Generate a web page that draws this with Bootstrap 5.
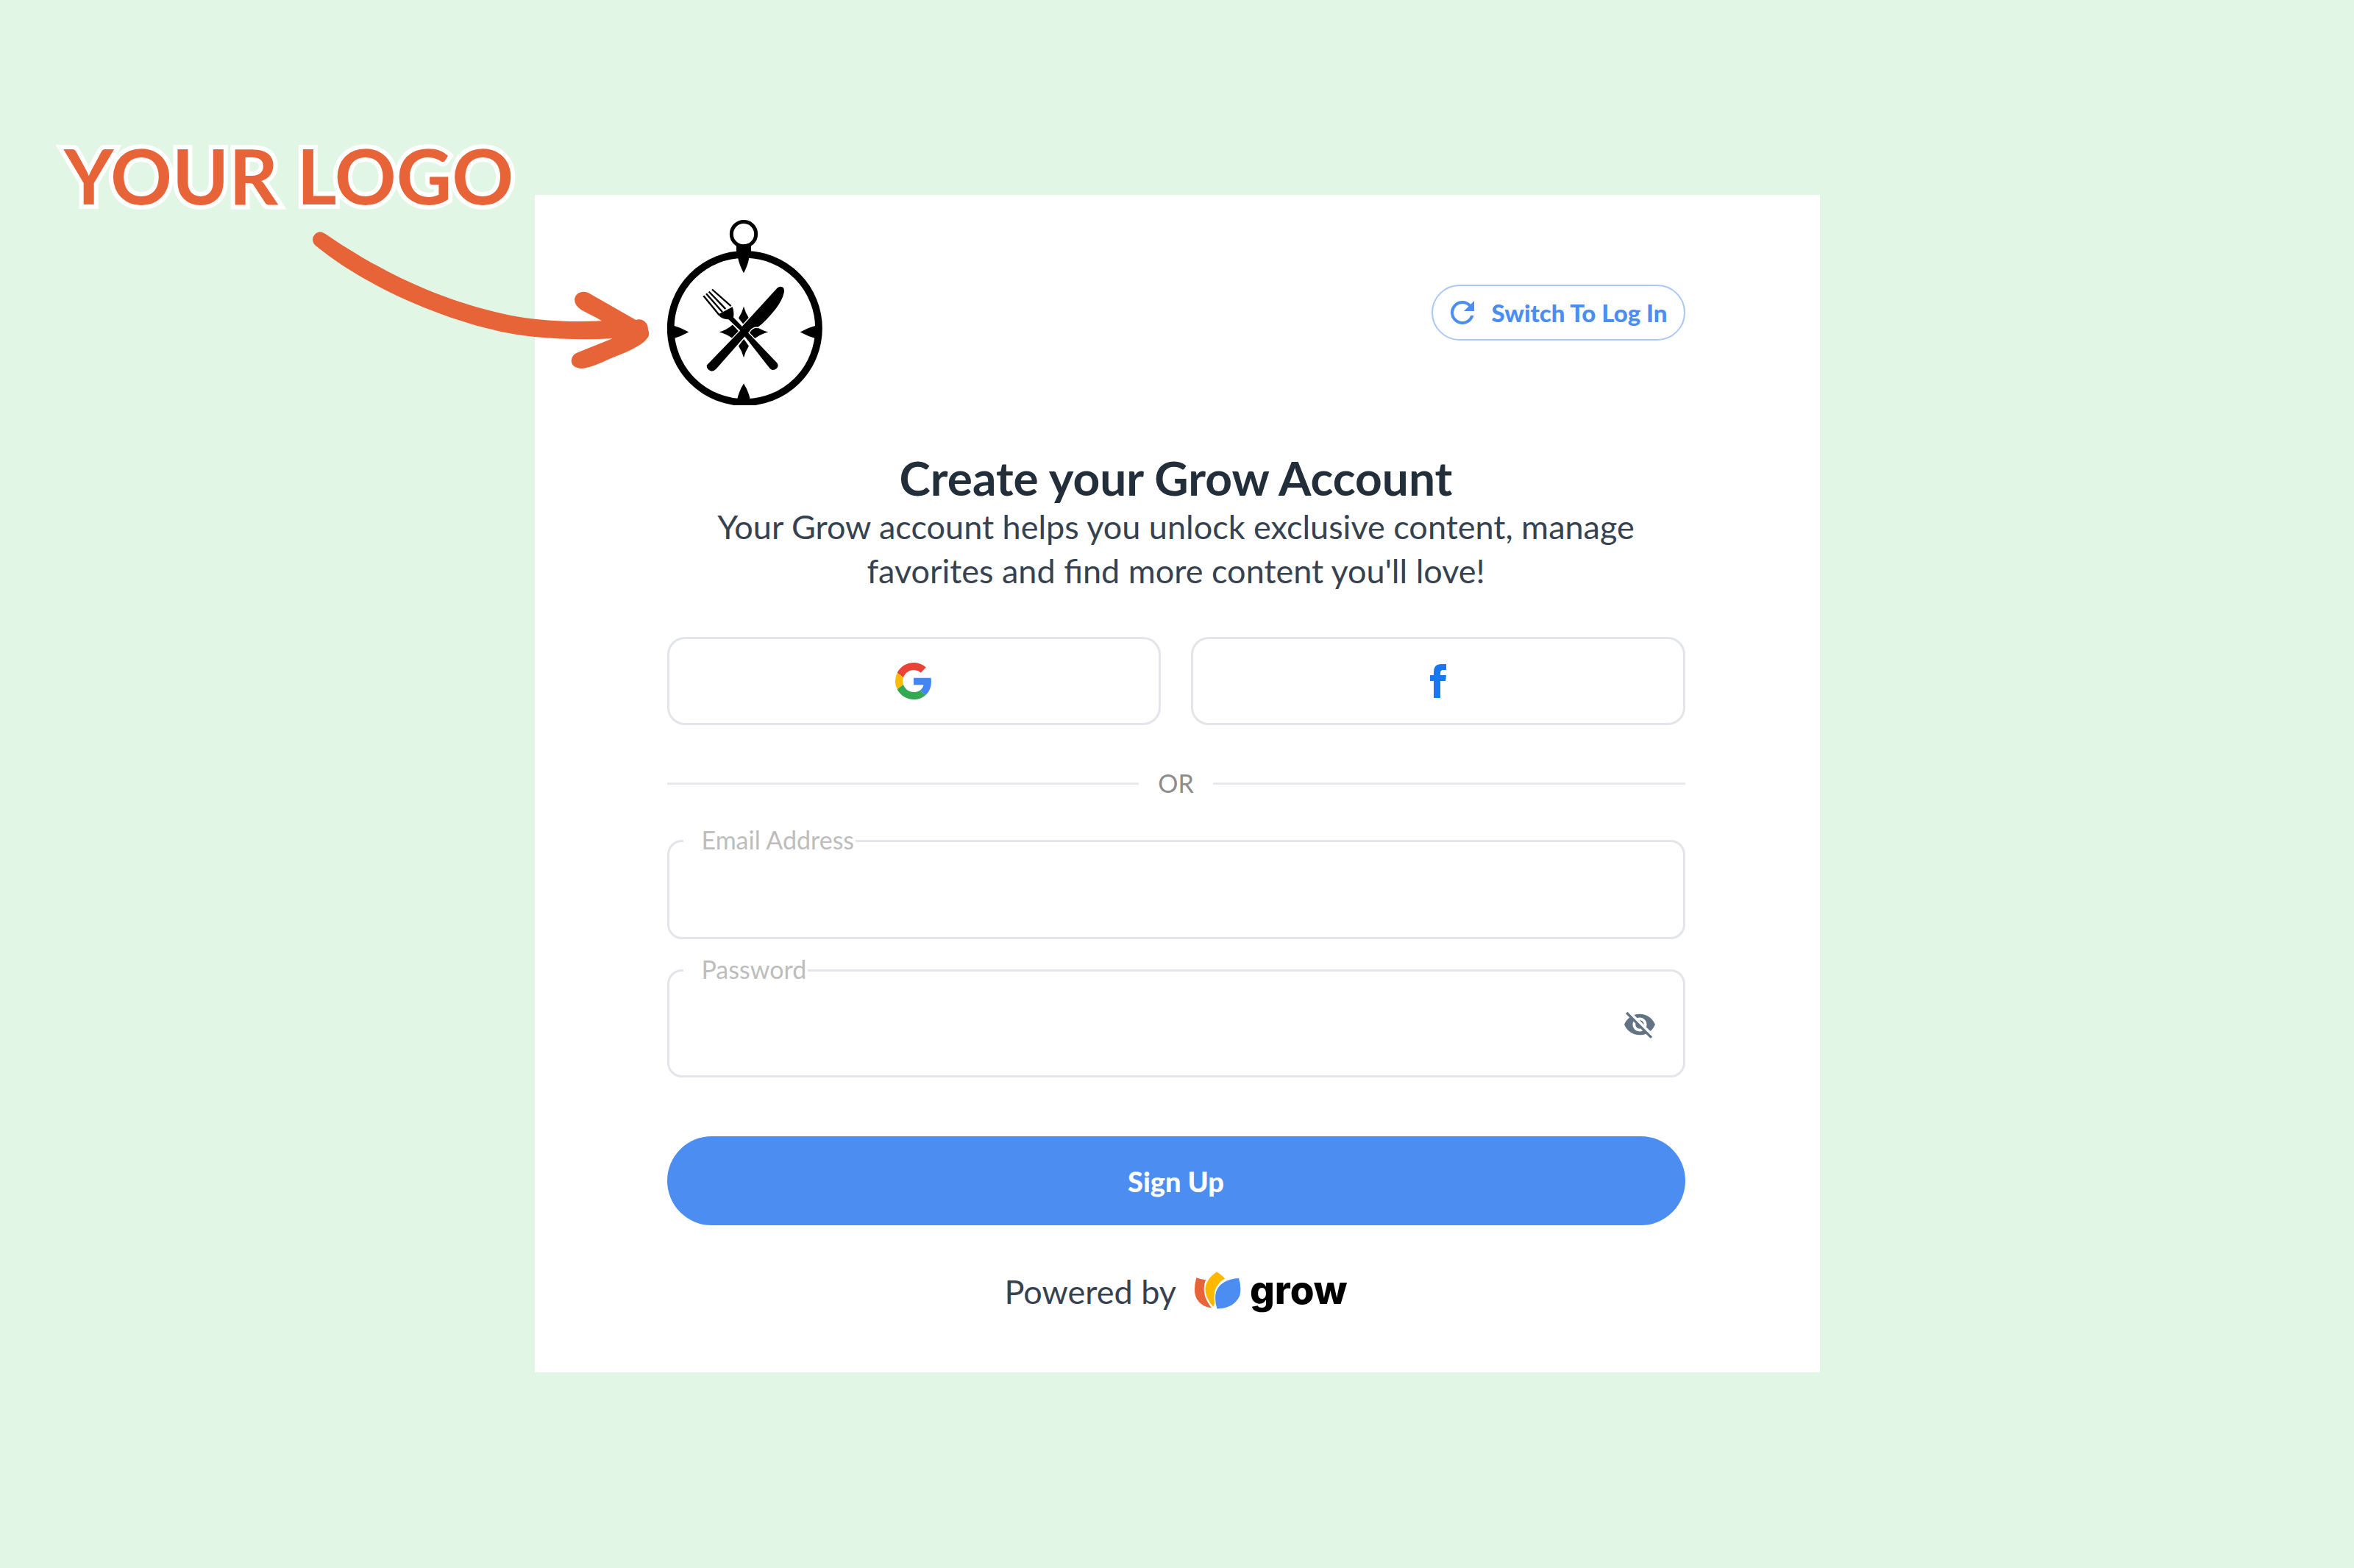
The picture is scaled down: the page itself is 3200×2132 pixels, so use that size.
<!DOCTYPE html>
<html lang="en">
<head>
<meta charset="utf-8">
<meta name="viewport" content="width=device-width, initial-scale=1">
<title>Create your Grow Account</title>
<link href="https://cdn.jsdelivr.net/npm/bootstrap@5.3.0/dist/css/bootstrap.min.css" rel="stylesheet">
<style>
  body { font-family: Lato, "Liberation Sans", sans-serif; background: #e1f6e5; color: #36424f; min-height: 100vh; }
  .page { padding: 265px 24px; }
  .callout { top: 177px; left: 87px; pointer-events: none; }
  .callout-text { font-size: 104px; line-height: 122px; font-weight: 700; color: #e76338; -webkit-text-stroke: 12px #fff; paint-order: stroke fill; }
  .callout-arrow { top: 113px; left: 313px; }
  .signup { max-width: 1747px; background: #fff; padding: 34px 183px 80px 180px; }
  .switch { height: 76px; padding: 0 22px 0 24px; gap: 24px; border: 2px solid #a9c8f9; color: #4c8df1; font-size: 33px; line-height: 40px; font-weight: 900; }
  .switch:hover { background: #eef4fe; color: #4c8df1; border-color: #4c8df1; }
  .heading { font-size: 64px; line-height: 72px; font-weight: 700; color: #222e3a; margin: 63px 0 0; }
  .sub { font-size: 45px; line-height: 60px; max-width: 1280px; }
  .stack { margin-top: 60px; }
  .socials { gap: 41px; }
  .social { flex: 1 1 0; height: 120px; border: 3px solid #e3e5ea; border-radius: 24px; }
  .or-row { gap: 26px; font-size: 34px; line-height: 38px; color: #8c8c8c; }
  .or-line { height: 3px; background: #e7e9ed; }
  .fields { margin-top: 58px; gap: 41px; }
  .field { height: 135px; border: 3px solid #e3e5ea; border-radius: 20px; font-size: 40px; padding: 0 44px; }
  .field-tall { height: 147px; padding-right: 110px; }
  .field-label { top: -20px; left: 22px; padding: 0 2px 0 25px; background: #fff; color: #bdbdbd; font-size: 34px; line-height: 40px; }
  .eye { right: 41px; top: 54px; line-height: 0; }
  .submit { height: 121px; margin-top: 80px; background: #4c8df1; color: #fff; font-size: 38px; line-height: 46px; font-weight: 900; }
  .submit:hover { background: #3b7de2; color: #fff; }
  .powered { font-size: 45px; line-height: 60px; gap: 24px; }
  .brand { gap: 12px; padding-bottom: 2px; margin-top: -2px; color: #000; }
  .brand-name { font-family: Inter, "Liberation Sans", sans-serif; font-weight: 800; font-size: 53px; line-height: 60px; }
</style>
<script src="https://cdn.jsdelivr.net/npm/bootstrap@5.3.0/dist/js/bootstrap.bundle.min.js"></script>
</head>
<body>
<div class="page position-relative">
  <main class="signup mx-auto">
    <header class="d-flex align-items-center justify-content-between">
      <svg width="211" height="252" viewBox="50 57 633 755" role="img" aria-label="Compass with fork and knife">
        <g fill="none" stroke="#000">
          <circle cx="366" cy="499" r="302" stroke-width="29"/>
          <circle cx="362" cy="114" r="50" stroke-width="15"/>
        </g>
        <path d="M332 157H392V210H384Q380 240 362 273Q344 240 338 210H332Z"/>
        <path d="M72 486Q105 495 138 514Q105 532 72 542ZM660 486Q625 495 592 514Q625 532 660 542ZM334 795Q342 755 362 724Q382 755 390 795Z"/>
        <path d="M362 410Q369 436 383 457L362 484L341 457Q355 436 362 410ZM362 618Q369 592 383 571L362 542L341 571Q355 592 362 618ZM262 514Q292 506 317 484L344 514L317 540Q292 522 262 514ZM462 514Q432 506 407 488L382 514L407 540Q432 522 462 514Z"/>
        <g stroke="#fff" stroke-width="8">
          <path d="M499 334Q510 325 522 332Q528 338 527 350Q520 385 492 420Q450 472 420 494Q400 490 386 510L250 664Q240 674 231 674Q211 668 211 650Q220 640 226 634L350 506L358 488Z"/>
          <path d="M316 411Q324 428 320 454L498 640Q506 652 497 662Q483 674 470 664L462 654L345 505L300 462Q278 462 264 450L258 442Z"/>
        </g>
        <path d="M499 334Q510 325 522 332Q528 338 527 350Q520 385 492 420Q450 472 420 494Q400 490 386 510L250 664Q240 674 231 674Q211 668 211 650Q220 640 226 634L350 506L358 488Z"/>
        <path d="M316 411Q324 428 320 454L498 640Q506 652 497 662Q483 674 470 664L462 654L345 505L300 462Q278 462 264 450L258 442Z"/>
        <path fill="none" stroke="#000" stroke-width="7" d="M198 366L262 444M209 357L275 432M220 349L288 420M233 340L310 408"/>
      </svg>
      <button type="button" class="switch btn rounded-pill d-flex align-items-center">
        <svg width="32" height="32" viewBox="4 4 16 16" fill="currentColor" aria-hidden="true"><path d="M17.65 6.35A7.96 7.96 0 0 0 12 4a8 8 0 1 0 7.73 10h-2.08A6 6 0 1 1 12 6c1.66 0 3.14.69 4.22 1.78L13 11h7V4z"/></svg>
        Switch To Log In
      </button>
    </header>

    <h1 class="heading text-center">Create your Grow Account</h1>
    <p class="sub text-center mx-auto mb-0">Your Grow account helps you unlock exclusive content, manage favorites and find more content you'll love!</p>

    <div class="socials stack d-flex">
      <button type="button" class="social btn d-flex align-items-center justify-content-center p-0" aria-label="Continue with Google">
        <svg width="50" height="50" viewBox="0 0 48 48" aria-hidden="true">
          <path fill="#EA4335" d="M24 9.5c3.54 0 6.71 1.22 9.21 3.6l6.85-6.85C35.9 2.38 30.47 0 24 0 14.62 0 6.51 5.38 2.56 13.22l7.98 6.19C12.43 13.72 17.74 9.5 24 9.5z"/>
          <path fill="#4285F4" d="M46.98 24.55c0-1.57-.15-3.09-.38-4.55H24v9.02h12.94c-.58 2.96-2.26 5.48-4.78 7.18l7.73 6c4.51-4.18 7.09-10.36 7.09-17.65z"/>
          <path fill="#FBBC05" d="M10.53 28.59A14.5 14.5 0 0 1 9.77 24c0-1.6.27-3.14.76-4.59l-7.98-6.19A23.9 23.9 0 0 0 0 24c0 3.88.92 7.54 2.56 10.78z"/>
          <path fill="#34A853" d="M24 48c6.48 0 11.93-2.13 15.89-5.81l-7.73-6c-2.15 1.45-4.92 2.3-8.16 2.3-6.26 0-11.57-4.22-13.47-9.91l-7.98 6.19C6.51 42.62 14.62 48 24 48z"/>
        </svg>
      </button>
      <button type="button" class="social btn d-flex align-items-center justify-content-center p-0" aria-label="Continue with Facebook">
        <svg width="22" height="46" viewBox="0 0 22 46" aria-hidden="true"><path fill="#1877f2" d="M5 46V23H0V15H5V11Q5 0 15 0H22V8H18Q14 8 14 12V15H22L21 23H14V46Z"/></svg>
      </button>
    </div>

    <div class="or-row stack d-flex align-items-center">
      <div class="or-line flex-fill"></div>OR<div class="or-line flex-fill"></div>
    </div>

    <form class="m-0" onsubmit="return false">
      <div class="fields d-flex flex-column">
        <div class="position-relative">
          <input type="email" id="email" class="field form-control">
          <label for="email" class="field-label position-absolute">Email Address</label>
        </div>
        <div class="position-relative">
          <input type="password" id="password" class="field field-tall form-control">
          <label for="password" class="field-label position-absolute">Password</label>
          <button type="button" class="eye position-absolute border-0 bg-transparent p-0" aria-label="Show password">
            <svg width="42" height="42" viewBox="1 1 22 22" fill="#627384" aria-hidden="true"><path d="M12 7c2.76 0 5 2.24 5 5 0 .65-.13 1.26-.36 1.83l2.92 2.92c1.51-1.26 2.7-2.89 3.43-4.75-1.73-4.39-6-7.5-11-7.5-1.4 0-2.74.25-3.98.7l2.16 2.16C10.74 7.13 11.35 7 12 7zM2 4.27l2.28 2.28.46.46C3.08 8.3 1.78 10.02 1 12c1.73 4.39 6 7.5 11 7.5 1.55 0 3.03-.3 4.38-.84l.42.42L19.73 22 21 20.73 3.27 3 2 4.27zM7.53 9.8l1.55 1.55c-.05.21-.08.43-.08.65 0 1.66 1.34 3 3 3 .22 0 .44-.03.65-.08l1.55 1.55c-.67.33-1.41.53-2.2.53-2.76 0-5-2.24-5-5 0-.79.2-1.53.53-2.2zm4.31-.78l3.15 3.15.02-.16c0-1.66-1.34-3-3-3l-.17.01z"/></svg>
          </button>
        </div>
      </div>
      <button type="submit" class="submit btn rounded-pill w-100 border-0">Sign Up</button>
    </form>

    <footer class="powered stack d-flex align-items-center justify-content-center">
      <span>Powered by</span>
      <span class="brand d-flex align-items-center">
        <svg width="64" height="51" viewBox="850 85 191 151" aria-hidden="true">
          <path fill="#e76338" d="M860 109Q880 117 898 118Q888 140 892 170Q896 198 922 232Q880 226 862 196Q845 165 860 109Z"/>
          <path fill="#ffb800" d="M943 85Q960 95 976 112Q946 130 936 160Q930 180 934 214L928 227Q896 190 896 155Q898 115 943 85Z"/>
          <path fill="#4c8df1" d="M1032 111Q1044 150 1036 182Q1012 234 944 235Q932 200 940 165Q960 115 1032 111Z"/>
        </svg>
        <span class="brand-name">grow</span>
      </span>
    </footer>
  </main>

  <div class="callout position-absolute">
    <div class="callout-text text-nowrap">YOUR LOGO</div>
    <svg class="callout-arrow position-absolute" width="500" height="230" viewBox="0 0 1500 690" aria-hidden="true">
      <path fill="#e76338" d="M104 76Q114 76 128 85C300 203 550 345 860 412C960 435 1100 446 1254 439C1225 420 1195 408 1170 394Q1143 375 1143 352C1146 325 1175 313 1200 325L1393 435C1420 427 1443 445 1443 474Q1450 492 1444 503C1430 530 1380 556 1330 576C1280 594 1230 624 1188 631C1150 638 1130 622 1130 600Q1132 577 1156 568L1298 511C1150 518 1000 512 880 490C620 440 300 305 90 134Q76 124 75 107Q78 80 104 76Z"/>
    </svg>
  </div>
</div>
</body>
</html>
